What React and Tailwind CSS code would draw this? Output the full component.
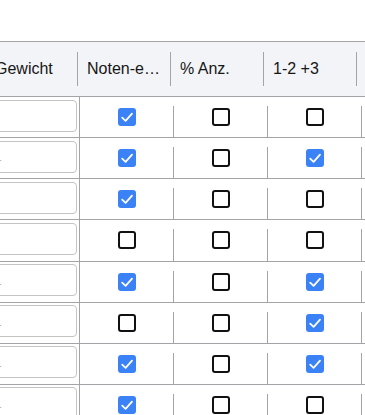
import React from 'react';

const rows = [
  { val: '', checks: [true, false, false] },
  { val: '1', checks: [true, false, true] },
  { val: '', checks: [true, false, false] },
  { val: '', checks: [false, false, false] },
  { val: '1', checks: [true, false, true] },
  { val: '1', checks: [false, false, true] },
  { val: '1', checks: [true, false, true] },
  { val: '1', checks: [true, false, false] },
];

function Box({ checked }) {
  if (checked) {
    return (
      <div className="w-[18px] h-[18px] rounded-[3px] bg-[#3b82f6] flex items-center justify-center">
        <svg width="18" height="18" viewBox="0 0 18 18" fill="none">
          <path d="M4.2 9.6 L7.6 12.8 L14 5.6" stroke="white" strokeWidth="1.8" strokeLinecap="round" strokeLinejoin="round" />
        </svg>
      </div>
    );
  }
  return <div className="w-[18px] h-[18px] rounded-[3px] border-2 border-[#111] bg-white" />;
}

function HeadCell({ label, width, pad }) {
  return (
    <div className="flex items-center h-full shrink-0" style={{ width }}>
      <span className="flex-1 min-w-0 truncate pr-[7px]" style={{ paddingLeft: pad }}>{label}</span>
      <div className="w-px h-[34px] bg-[#a3a3a8]" />
    </div>
  );
}

export default function App() {
  return (
    <div className="w-[365px] h-[415px] overflow-hidden bg-white font-['Liberation_Sans',Arial,sans-serif] text-[#161616]">
      <div className="h-[41px]" />
      <div className="-ml-[21px] w-[520px]">
        {/* header */}
        <div className="flex h-[56px] border-y border-[#a3a3a8] bg-[#f3f4f7] text-[16px]">
          <HeadCell label="Gewicht" width={99} pad={16} />
          <HeadCell label="Noten-erfassung" width={93} pad={9} />
          <HeadCell label="% Anz." width={93} pad={9} />
          <HeadCell label="1-2 +3" width={93} pad={9} />
          <div className="flex-1" />
        </div>

        {/* body */}
        {rows.map((r, i) => (
          <div key={i} className="flex h-[41.14px] border-b border-[#a3a3a8]">
            <div className="w-[101px] shrink-0 border-r border-[#a3a3a8] pt-[2.5px] pr-[2px]">
              <div className="h-[32px] rounded-[4px] border border-[#c4c4c4] bg-white flex items-center pl-[14px] text-[14px] text-[#b8b8b8]">
                {r.val}
              </div>
            </div>
            {r.checks.map((c, j) => (
              <div key={j} className="w-[94px] shrink-0 flex">
                <div className="flex-1 flex items-center justify-center">
                  <Box checked={c} />
                </div>
                <div className="w-px mt-[9px] bg-[#a3a3a8]" />
              </div>
            ))}
            <div className="flex-1" />
          </div>
        ))}
      </div>
    </div>
  );
}
